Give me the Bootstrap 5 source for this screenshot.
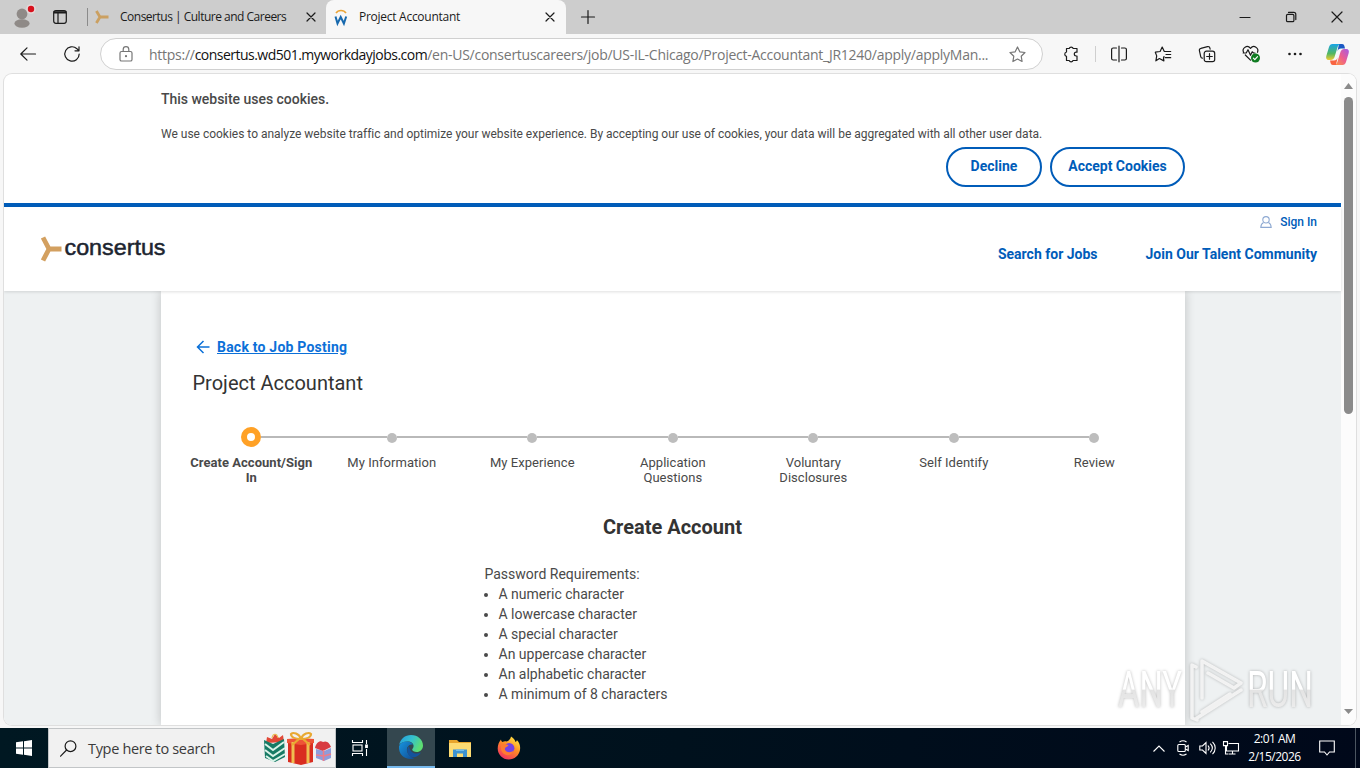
<!DOCTYPE html>
<html lang="en">
<head>
  <meta charset="utf-8" />
  <title>Project Accountant</title>
  <meta name="viewport" content="width=device-width, initial-scale=1" />
  <link href="https://cdn.jsdelivr.net/npm/bootstrap@5.3.0/dist/css/bootstrap.min.css" rel="stylesheet" />
  <style>
    body { width: 1360px; height: 768px; overflow: hidden; background: #f7f7f7; font-family: Roboto, "Liberation Sans", sans-serif; color: #494949; }
    svg { display: block; flex-shrink: 0; overflow: visible; }
    .ui { font-family: "Open Sans", "Noto Sans", sans-serif; }
    .line { fill: none; stroke: #1b1b1b; stroke-width: 1.2; stroke-linecap: round; stroke-linejoin: round; }
    .line-muted { stroke: #767676; }
    .cell { display: flex; align-items: center; justify-content: center; flex-shrink: 0; height: 100%; width: 44px; }
    .w24 { width: 24px; }
    .w32 { width: 32px; }
    .w40 { width: 40px; }
    .w46 { width: 46px; }
    .w48 { width: 48px; }
    .w50 { width: 50px; }
    .w56 { width: 56px; }

    /* browser chrome */
    .tabstrip { height: 34px; background: #cdcdcd; color: #1b1b1b; font-size: 12px; }
    .tab-sep { width: 1px; height: 18px; background: #8b8b8b; margin-left: 11px; }
    .tab { height: 34px; width: 238px; padding: 0 8px 1px 7px; white-space: nowrap; }
    .tab-active { width: 240px; background: #f7f7f7; border-radius: 8px 8px 0 0; padding-left: 8px; padding-right: 9px; }
    .tab-title { letter-spacing: -.5px; margin: 0 auto 0 11px; }
    .tab-active .tab-title { letter-spacing: -.27px; margin-left: 9px; }
    .toolbar { height: 40px; background: #f7f7f7; }
    .address { width: 943px; height: 32px; border: 1px solid #d0d0d0; border-radius: 16px; background: #fff; color: #767676; font-size: 14px; white-space: nowrap; margin-left: 12px; }
    .address span { letter-spacing: -.26px; }
    .address b { font-weight: 400; color: #111; letter-spacing: -.52px; }
    .tool-sep { width: 1px; height: 16px; background: #cfcfcf; margin: 0 1px; }

    /* page viewport */
    .viewport { height: 651px; margin: 0 4px 3px; border-radius: 8px; background: #fff; overflow: hidden; box-shadow: 0 0 0 1px #dfdfdf; flex-shrink: 0; }
    .site { width: 1337px; flex-shrink: 0; }
    .scroller { width: 15px; background: #fcfcfc; padding: 9px 0 11px; }
    .thumb { width: 9px; height: 317px; border-radius: 5px; background: #8b8b8b; margin: 8px 0 auto; }
    .cookie { height: 133px; border-bottom: 4px solid #005cb9; padding: 15px 156px 0 157px; }
    .cookie h2 { font-size: 14px; line-height: 20px; font-weight: 500; letter-spacing: -.02px; margin-bottom: 15px; }
    .cookie p { font-size: 12px; line-height: 20px; letter-spacing: -.008px; margin-bottom: 3px; white-space: nowrap; }
    .pill { height: 40px; border: 2px solid #005cb9; border-radius: 20px; color: #005cb9; font-size: 14px; font-weight: 700; padding: 0 0 2px; white-space: nowrap; }
    .decline { width: 96px; }
    .accept { width: 135px; }
    .masthead { height: 84px; padding: 1px 24px 0 36px; box-shadow: 0 1px 3px rgba(0,0,0,.13); position: relative; z-index: 1; background: #fff; }
    .masthead a { color: #005cb9; font-weight: 700; font-size: 14px; text-decoration: none; white-space: nowrap; line-height: 20px; }
    .masthead .signin { font-size: 12px; font-weight: 500; }
    .brand { font-family: "Liberation Sans", sans-serif; }
    .stage { background: #eef1f2; height: 434px; }
    .sheet { width: 1024px; height: 434px; margin-left: 157px; background: #fff; box-shadow: 0 0 10px rgba(0,0,0,.2); padding: 46px 20px 0; }
    .back { color: #0b70d8; font-size: 14px; font-weight: 700; line-height: 20px; letter-spacing: .22px; margin-left: 15px; }
    .job { font-size: 20px; line-height: 24px; font-weight: 400; color: #333; margin: 14px 0 0 11.5px; }
    .steps { margin: 32px .4px 0 0; height: 62px; }
    .step { flex: 1 1 0; text-align: center; font-size: 13px; line-height: 15px; letter-spacing: .04px; }
    .rail { height: 20px; display: grid; grid-template-columns: 1fr 10px 1fr; align-items: center; margin-bottom: 8px; }
    .rail i { height: 2px; background: #b9b9b9; }
    .rail .dot { height: 10px; border-radius: 50%; margin-top: 2px; background: #bdbdbd; }
    .step-now .rail { grid-template-columns: 1fr 20px 1fr; }
    .step-now .rail .dot { height: 20px; margin: 0; background: #fff; border: 6px solid #ffa126; }
    .step:first-child i:first-child, .step:last-child i:last-child { background: none; }
    .form-title { font-size: 20px; line-height: 24px; font-weight: 700; color: #333; text-align: center; margin: 26px 1px 0 0; }
    .rules { margin: 25px 0 0 303.5px; font-size: 14px; line-height: 20px; }
    .rules ul { padding-left: 14px; margin: 0; }
    .rules li::marker { font-size: 13px; }

    .watermark { position: absolute; left: 1110px; top: 650px; z-index: 5; filter: drop-shadow(0 0 1.5px rgba(0,0,0,.26)); }

    /* taskbar */
    .taskbar { height: 40px; background: linear-gradient(90deg, #001822, #00111d 50%, #00081a); color: #fff; }
    .search { width: 288px; height: 40px; background: #f1f1f1; border: 1px solid #c2c5c7; color: #3b3b3b; font-size: 14.5px; padding: 0 3px 0 11px; letter-spacing: -.33px; }
    .search span { padding-top: 1px; margin-left: -1px; }
    .running { background: #34474f; border-bottom: 2px solid #76b9ed; margin-left: 3px; }
    .tray { stroke: #fff; fill: none; stroke-width: 1.1; }
    .clock { width: 64px; font-size: 12px; line-height: 18px; text-align: center; letter-spacing: -.5px; white-space: nowrap; padding-right: 1px; }
    .show-desktop { width: 5px; height: 40px; margin-left: 8px; border-left: 1px solid #4b5560; }
  </style>
</head>
<body class="d-flex flex-column">

  <div class="tabstrip ui d-flex align-items-center flex-shrink-0">
    <div class="cell">
      <svg width="24" height="24" viewBox="0 0 24 24"><circle cx="12" cy="9" r="5.4" fill="#8f8a87"/><ellipse cx="12" cy="18.5" rx="7.6" ry="4.2" fill="#8f8a87"/><circle cx="21" cy="4" r="4.8" fill="#e4d8d8"/><circle cx="21" cy="4" r="3.2" fill="#d8111d"/></svg>
    </div>
    <div class="cell w32">
      <svg class="line" width="14" height="14" viewBox="0 0 14 14"><rect x=".7" y=".7" width="12.6" height="12.6" rx="2.2"/><path d="M1 3h12M1 1.8h12M5 3v10"/></svg>
    </div>
    <div class="tab-sep"></div>
    <div class="tab d-flex align-items-center">
      <svg width="14" height="14" viewBox="0 0 14 14" fill="none" stroke="#cba061" stroke-width="2.8"><path d="M1.4 1 5 7 1.4 13M5 7h8.5"/></svg>
      <span class="tab-title">Consertus | Culture and Careers</span>
      <svg class="line" width="14" height="14" viewBox="0 0 14 14"><path d="m3 3 8 8M11 3l-8 8"/></svg>
    </div>
    <div class="tab tab-active d-flex align-items-center">
      <svg width="16" height="16" viewBox="0 0 16 16" fill="none"><path d="M2 4C4.2.6 9.800.6 12 4" stroke="#eaa437" stroke-width="1.6"/><path d="m1.500 7.500 2 7 3.200-6.500 3.200 6.500 2.300-7" stroke="#1769ae" stroke-width="2"/></svg>
      <span class="tab-title">Project Accountant</span>
      <svg class="line" width="14" height="14" viewBox="0 0 14 14"><path d="m3 3 8 8M11 3l-8 8"/></svg>
    </div>
    <div class="cell me-auto"><svg class="line" width="14" height="14" viewBox="0 0 14 14"><path d="M7 .5v13M.5 7h13"/></svg></div>
    <div class="cell w46"><svg class="line" width="10" height="10" viewBox="0 0 10 10"><path d="M0 5.5h10"/></svg></div>
    <div class="cell w46"><svg class="line" width="10" height="10" viewBox="0 0 10 10"><rect x=".5" y="2.3" width="7.4" height="7.4" rx="1.3"/><path d="M2.5.4h5.3a2 2 0 0 1 2 2v5.2"/></svg></div>
    <div class="cell w46"><svg class="line" width="10" height="10" viewBox="0 0 10 10"><path d="m0 0 10 10M10 0 0 10"/></svg></div>
  </div>

  <div class="toolbar d-flex align-items-center flex-shrink-0">
    <div class="cell w56"><svg class="line" width="16" height="14" viewBox="0 0 16 14"><path d="M15.500 7H.8M7 .8.8 7 7 13.2"/></svg></div>
    <div class="cell w32"><svg class="line" width="16" height="16" viewBox="0 0 16 16"><path d="M15.200 8A7.200 7.200 0 1 1 12.900 2.700L15 4.800M15 .8v4h-4"/></svg></div>
    <div class="address ui d-flex align-items-center">
      <svg class="line line-muted ms-3 me-3" width="16" height="16" viewBox="0 0 16 16"><rect x="3" y="5.5" width="12" height="9.5" rx="1.6"/><path d="M6.200 5.500V3.400a2.800 2.800 0 0 1 5.600 0v2.100"/><circle cx="9" cy="10.2" r=".5" fill="#555"/></svg>
      <span>https://<b>consertus.wd501.myworkdayjobs.com</b>/en-US/consertuscareers/job/US-IL-Chicago/Project-Accountant_JR1240/apply/applyMan...</span>
      <svg class="line line-muted ms-auto me-3" width="17" height="17" viewBox="0 0 17 17"><path d="m8.500 1 2.300 4.800 5.200.7-3.800 3.700.9 5.300-4.600-2.500-4.600 2.500.9-5.300L1 6.500l5.200-.7Z"/></svg>
    </div>
    <div class="cell ms-1 ps-1"><svg class="line" width="16" height="16" viewBox="0 0 16 16"><path d="M3.500 2.500H6.200a2.100 2.100 0 0 1 4 0h3.800v3.700h-.8a1.900 1.900 0 0 0 0 3.800h.8v4.500H10a2 2 0 0 1-3.800 0H3.500v-4.200a2.200 2.200 0 0 1 0-4.300Z"/></svg></div>
    <div class="tool-sep ms-1"></div>
    <div class="cell"><svg class="line" width="16" height="16" viewBox="0 0 16 16"><path d="M8 .2v15.600M5.500 2H2.200C1.200 2 .6 2.600.6 3.500v9c0 .9.6 1.500 1.600 1.500h3.300M10.500 2h3.300c1 0 1.600.6 1.600 1.500v9c0 .9-.6 1.500-1.600 1.500h-3.300"/></svg></div>
    <div class="cell"><svg class="line" width="16" height="16" viewBox="0 0 16 16"><path d="M9 10.500 8.500 12l.4 2.900-4.500-2.400L.9 14.800l.8-4.900L.3 6.200l4.800-.7L7.200 1l2.100 4.500h6.400M11 8.500h4.700M10.300 11.700h5.400"/></svg></div>
    <div class="cell"><svg class="line" width="16" height="16" viewBox="0 0 16 16"><rect x="5.200" y="5.200" width="10.500" height="10.500" rx="2.200"/><path d="M10.500 7.700v5.500M7.700 10.500h5.600M3.400 12.200a2 2 0 0 1-1.600-1.400L.4 4.700a2 2 0 0 1 1.500-2.400L8.500.6a2 2 0 0 1 2.400 1.500l.2 1"/></svg></div>
    <div class="cell"><svg class="line" width="18" height="18" viewBox="0 0 18 18"><path d="M1.500 7.200C-.3 3 5.200-.7 8.500 3.300c3.300-4 8.700-.3 7 4M3.300 10l5.200 5.200M1.200 8h3L6 4.700l2.500 5.600 1.700-3.500L11.500 8H13"/><circle cx="13.500" cy="13" r="4.500" fill="#107c22" stroke="none"/><path d="m11.400 13.200 1.400 1.400 2.700-3" stroke="#fff"/></svg></div>
    <div class="cell"><svg width="14" height="4" viewBox="0 0 14 4" fill="#1b1b1b"><circle cx="1.500" cy="2" r="1.300"/><circle cx="7" cy="2" r="1.300"/><circle cx="12.500" cy="2" r="1.300"/></svg></div>
    <div class="cell w40">
      <svg width="23" height="21" viewBox="0 0 23 21">
        <defs>
          <linearGradient id="cpA" x1="0" y1="0" x2="0" y2="1"><stop offset="0" stop-color="#16a4e8"/><stop offset=".6" stop-color="#54b760"/><stop offset="1" stop-color="#f1cb32"/></linearGradient>
          <linearGradient id="cpB" x1="1" y1="0" x2="0" y2="1"><stop offset="0" stop-color="#a55ae6"/><stop offset=".5" stop-color="#ed5d8f"/><stop offset="1" stop-color="#ff983c"/></linearGradient>
        </defs>
        <path d="M13 0h3c2 0 2.400 1.400 3 4.500h-4c-2 0-3 1-3.600 3Z" fill="#1b59c4"/>
        <path d="M6.500 0h7.800c-1.800.6-2.400 2-3 4L8.700 12.500C8 14.800 7 16 4.500 16H2.600C.4 16-.3 14.300.3 12L3 3C3.700 1 4.600 0 6.500 0Z" fill="url(#cpA)"/>
        <path d="M16.500 21H8.700c1.800-.6 2.400-2 3-4l2.600-8.500C15 6.200 16 5 18.500 5h1.900c2.200 0 2.900 1.700 2.300 4L20 18c-.7 2-1.600 3-3.500 3Z" fill="url(#cpB)"/>
        <path d="M10 21H7c-2 0-2.400-1.400-3-4.500h4c2 0 3-1 3.600-3Z" fill="#f96442"/>
      </svg>
    </div>
  </div>

  <div class="viewport d-flex">
    <div class="site">
      <section class="cookie">
        <h2>This website uses cookies.</h2>
        <p>We use cookies to analyze website traffic and optimize your website experience. By accepting our use of cookies, your data will be aggregated with all other user data.</p>
        <div class="d-flex justify-content-end gap-2">
          <button class="btn pill decline">Decline</button>
          <button class="btn pill accept">Accept Cookies</button>
        </div>
      </section>

      <header class="masthead d-flex justify-content-between">
        <svg class="mt-4 brand" width="126" height="34" viewBox="0 0 126 34">
          <path d="M3 5.500 9 17 3 28.500M9 17H21.500" fill="none" stroke="#d3a060" stroke-width="4.8"/>
          <text x="24.5" y="23" font-size="22" textLength="101" lengthAdjust="spacingAndGlyphs" fill="#1d2530" stroke="#1d2530" stroke-width=".5">consertus</text>
        </svg>
        <div class="d-flex flex-column align-items-end">
          <a href="#" class="signin d-flex align-items-center mt-1">
            <svg class="me-2" width="12" height="12" viewBox="0 0 12 12" fill="none" stroke="#8ea9d2" stroke-width="1.1"><circle cx="6" cy="3.8" r="3.2"/><path d="M3.500 6.500C1.700 7.500.8 9 .8 11.400h10.400c0-2.400-.9-3.900-2.700-4.900"/></svg>
            Sign In
          </a>
          <nav class="d-flex gap-5 mt-2 pt-1">
            <a href="#">Search for Jobs</a>
            <a href="#">Join Our Talent Community</a>
          </nav>
        </div>
      </header>

      <main class="stage">
        <div class="sheet">
          <a href="#" class="back d-flex align-items-center text-decoration-none">
            <svg class="me-2" width="13" height="14" viewBox="0 0 13 14" fill="none" stroke="#0b70d8" stroke-width="1.5"><path d="M13.500 7H1.500M7.500 1l-6 6 6 6"/></svg>
            <span class="text-decoration-underline">Back to Job Posting</span>
          </a>
          <h3 class="job">Project Accountant</h3>

          <div class="steps d-flex">
            <div class="step step-now"><div class="rail"><i></i><span class="dot"></span><i></i></div><b>Create Account/Sign<br>In</b></div>
            <div class="step"><div class="rail"><i></i><span class="dot"></span><i></i></div>My Information</div>
            <div class="step"><div class="rail"><i></i><span class="dot"></span><i></i></div>My Experience</div>
            <div class="step"><div class="rail"><i></i><span class="dot"></span><i></i></div>Application<br>Questions</div>
            <div class="step"><div class="rail"><i></i><span class="dot"></span><i></i></div>Voluntary<br>Disclosures</div>
            <div class="step"><div class="rail"><i></i><span class="dot"></span><i></i></div>Self Identify</div>
            <div class="step"><div class="rail"><i></i><span class="dot"></span><i></i></div>Review</div>
          </div>

          <h2 class="form-title">Create Account</h2>
          <div class="rules">
            Password Requirements:
            <ul>
              <li>A numeric character</li>
              <li>A lowercase character</li>
              <li>A special character</li>
              <li>An uppercase character</li>
              <li>An alphabetic character</li>
              <li>A minimum of 8 characters</li>
            </ul>
          </div>
        </div>
      </main>
    </div>
    <div class="scroller d-flex flex-column align-items-center">
      <svg width="9" height="6" viewBox="0 0 9 6"><path d="M0 6 4.500 0 9 6Z" fill="#8b8b8b"/></svg>
      <div class="thumb"></div>
      <svg width="9" height="5" viewBox="0 0 9 5"><path d="M0 0h9L4.500 5Z" fill="#8b8b8b"/></svg>
    </div>
  </div>

  <svg class="watermark" width="210" height="75" viewBox="0 0 210 75">
    <defs>
      <linearGradient id="wm" x1="0" y1="20" x2="0" y2="60" gradientUnits="userSpaceOnUse"><stop offset="0" stop-color="#fff"/><stop offset=".48" stop-color="#fff"/><stop offset=".5" stop-color="#e3e3e3"/><stop offset="1" stop-color="#ededed"/></linearGradient>
    </defs>
    <g fill="url(#wm)" font-family="Roboto, sans-serif" font-size="50">
      <text x="8" y="57" textLength="64" lengthAdjust="spacingAndGlyphs">ANY</text>
      <text x="137" y="57" textLength="66" lengthAdjust="spacingAndGlyphs">RUN</text>
    </g>
    <path d="M86 17l-4-2v53l5 2M92 48V11l39 22-7 5-26-15M87 68l44-28M92 62l28-18" fill="none" stroke="#f6f6f6" stroke-width="3.5" stroke-linejoin="round" stroke-linecap="round" opacity=".9"/>
  </svg>

  <div class="taskbar ui d-flex align-items-center flex-shrink-0">
    <div class="cell w48"><svg width="16" height="16" viewBox="0 0 16 16" fill="#fff"><path d="M0 2.300 7 1.300v6.200H0ZM8 1.200 16 0v7.500H8ZM0 8.500h7v6.200l-7-1ZM8 8.500h8V16l-8-1.200Z"/></svg></div>
    <div class="search d-flex align-items-center">
      <svg class="line me-2 pe-1" width="21" height="17" viewBox="0 0 17 17"><circle cx="10.5" cy="6.2" r="5.4"/><path d="m6.600 10-6 6.200"/></svg>
      <span class="me-auto">Type here to search</span>
      <svg width="69" height="36" viewBox="0 0 69 36">
        <path d="m3 13 1-6 5 2 3-5 4 4 4-3 1 7Z" fill="#e24837"/>
        <path d="M9 8c1-5 5-5 6 0" fill="none" stroke="#e9b84a" stroke-width="1.2"/>
        <path d="M1 10l9 4 11-5 1 18-10 5-10-4Z" fill="#167a64"/>
        <path d="m2 14 8 6 11-8M2 20l8 6 12-8M3 26l7 5 12-7" fill="none" stroke="#d9f3e8" stroke-width="2"/>
        <path d="M25 11l13 2 12-2v21l-12 3-13-3Z" fill="#d92d20"/>
        <path d="M24 9l13-1 14 1v4l-13 2-14-2Z" fill="#ee5437"/>
        <path d="M30 12v21M45 12v21" stroke="#efbd50" stroke-width="3"/>
        <path d="M38 9c-2-6-8-7-10-5 0 3 4 5 10 5ZM38 9c2-6 8-7 10-5 0 3-4 5-10 5ZM36 9l-7 6M40 9l7 6" fill="none" stroke="#e9a932" stroke-width="2.2"/>
        <path d="M53 19l8 2 7-3v10l-7 3-8-3Z" fill="#8d9cdb"/>
        <path d="M52 18c1-5 5-8 8-6 4-2 7 2 8 5l-8 4Z" fill="#d83b42"/>
        <path d="M60.500 20v11M53 25l8 1 7-2" stroke="#ef7c88" stroke-width="1.6" fill="none"/>
      </svg>
    </div>
    <div class="cell w48"><svg class="tray" width="16" height="16" viewBox="0 0 16 16"><path d="M.5 0v2.500h10V0M.5 16v-2.500h10V16M14.500 0v4M14.500 9v7"/><rect x="1" y="5" width="9" height="6"/><rect x="13.7" y="5" width="1.6" height="2.5" fill="#fff"/></svg></div>
    <div class="cell w48 running">
      <svg width="24" height="24" viewBox="0 0 24 24">
        <defs>
          <linearGradient id="edA" x1="0" y1="0" x2="1" y2=".4"><stop offset="0" stop-color="#229bdf"/><stop offset=".55" stop-color="#35c1cd"/><stop offset="1" stop-color="#5ddd72"/></linearGradient>
          <linearGradient id="edB" x1="0" y1="0" x2="1" y2="1"><stop offset="0" stop-color="#1795df"/><stop offset="1" stop-color="#114a91"/></linearGradient>
        </defs>
        <path d="M.2 10C1.200 4 6 0 12 0c7 0 12 5 12 10.500 0 4-3 6.500-6.300 6.500-2.400 0-4.500-.9-4.500-2.400 0-1 1.400-1.500 1.400-3.600 0-2.500-2.500-4.500-5.800-4.500C4.500 6.500 1.500 8 .2 10Z" fill="url(#edA)"/>
        <path d="M0 11.500C1 8 4 6.400 8.300 6.400c2.700 0 5 1.500 5.800 3.200C10 8.500 7.500 12 8 15.500c.5 4 4 6.500 7.500 8C7 26-.7 20 0 11.500Z" fill="url(#edB)"/>
        <path d="M10 11c-3.500 3.500-1.500 9 2.500 11 3 1.200 7.500-1 9.500-4.500-5 2.500-11 1-12-6.500Z" fill="#14539c"/>
      </svg>
    </div>
    <div class="cell w50">
      <svg width="22" height="18" viewBox="0 0 22 18"><path d="M0 1h8l2 2h12v15H0Z" fill="#e8a52c"/><path d="M0 4h22v14H0Z" fill="#fddb72"/><path d="M4 18v-7.500h14V18h-4v-3.500H8V18Z" fill="#3e92d0"/><path d="M7 10.500h8v1.500H7Z" fill="#73bdea"/></svg>
    </div>
    <div class="cell me-auto w48">
      <svg width="24" height="24" viewBox="0 0 24 24">
        <defs><linearGradient id="ffA" x1=".8" y1="0" x2=".2" y2="1"><stop offset="0" stop-color="#ffec45"/><stop offset=".45" stop-color="#ff8b25"/><stop offset="1" stop-color="#f02a66"/></linearGradient></defs>
        <path d="M14 .5c2.500 1.500 4 3.500 4.500 5.500 1-.5 1.300-1 1.300-2 3 3 3.700 6 3.200 10-1 5.500-5.500 9.500-11.200 9.500C5.500 23.500.7 18.500.7 12.500.7 9 2 5.800 4 3.500c.1 1.300.5 2 1.500 2.500C7 5 8.500 5 9.500 5.500 11 5 13.500 3.500 14 .5Z" fill="url(#ffA)"/>
        <circle cx="12.2" cy="12.3" r="5.2" fill="#7542e5"/>
        <path d="M4.500 8.500C7 7 9 8.500 11.500 9.300c-.5 1.500-3.500 1.500-3.700 4 1 3.300 6 4.200 9 1-1 4.200-5 6-8.800 4.200C4.500 17 3 12.500 4.500 8.500Z" fill="#ff7b30"/>
      </svg>
    </div>
    <div class="cell w24"><svg class="tray" width="12" height="7" viewBox="0 0 12 7"><path d="m.5 6.500 5.500-5.500 5.500 5.500"/></svg></div>
    <div class="cell w24"><svg class="tray" width="12" height="16" viewBox="0 0 12 16"><rect x=".8" y="4.5" width="7.5" height="7" rx="1"/><path d="m8.500 7 2.700-1.500v5L8.500 9M2.500 2c2-1.400 5-1.400 7 0M2.500 14c2 1.400 5 1.400 7 0"/></svg></div>
    <div class="cell w24"><svg class="tray" width="17" height="14" viewBox="0 0 17 14"><path d="M.8 5h2.700L7 1.500v11L3.500 9H.8ZM9 4.500c1.300 1.500 1.300 3.500 0 5M11.300 2.700c2.500 2.600 2.500 6 0 8.600M13.500.8c3.600 3.600 3.600 8.800 0 12.400"/></svg></div>
    <div class="cell w24"><svg class="tray" width="16" height="14" viewBox="0 0 16 14"><path d="M5.500 2.500h10v7.500H3.500V5M9.500 10v3M5.500 13h7M.5.600h4v4h-4ZM2.500 4.600V13H5"/></svg></div>
    <div class="clock">2:01 AM<br>2/15/2026</div>
    <div class="cell w40"><svg class="tray" width="16" height="16" viewBox="0 0 16 16"><path d="M.7 1h14.600v11h-4.800l-2.500 3-2.500-3H.7Z"/></svg></div>
    <div class="show-desktop"></div>
  </div>

  <script src="https://cdn.jsdelivr.net/npm/bootstrap@5.3.0/dist/js/bootstrap.bundle.min.js"></script>
</body>
</html>
